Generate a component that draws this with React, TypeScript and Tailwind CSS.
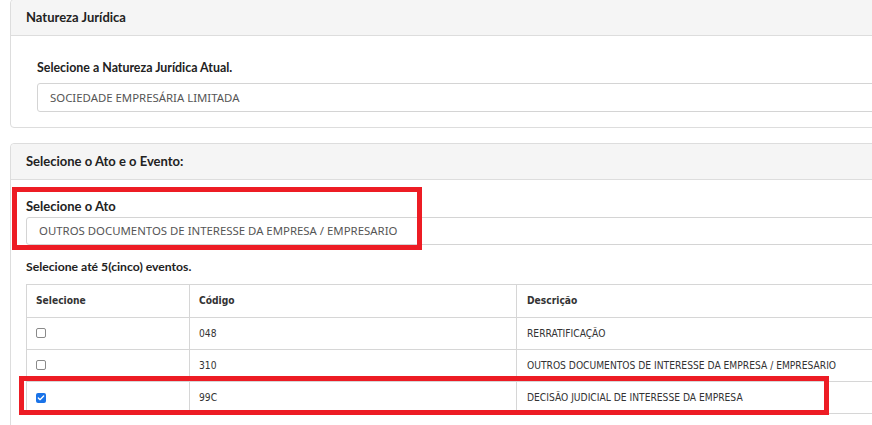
import { Check } from "lucide-react";

interface Evento {
  codigo: string;
  descricao: string;
  selecionado: boolean;
}

const eventos: Evento[] = [
  { codigo: "048", descricao: "RERRATIFICAÇÃO", selecionado: false },
  { codigo: "310", descricao: "OUTROS DOCUMENTOS DE INTERESSE DA EMPRESA / EMPRESARIO", selecionado: false },
  { codigo: "99C", descricao: "DECISÃO JUDICIAL DE INTERESSE DA EMPRESA", selecionado: true },
];

function Checkbox({ checked }: { checked: boolean }) {
  if (checked) {
    return (
      <span className="inline-flex w-[10px] h-[10px] items-center justify-center rounded-[2px] bg-[#1a73e8]">
        <Check className="w-[8px] h-[8px] text-white" strokeWidth={4} />
      </span>
    );
  }
  return <span className="inline-block w-[10px] h-[10px] rounded-[2px] border border-[#8a8a8a] bg-white" />;
}

function Panel({ title, children, className = "" }: { title: string; children: React.ReactNode; className?: string }) {
  return (
    <div className={`border border-[#dddddd] rounded-[4px] bg-white ${className}`}>
      <div className="h-[36px] flex items-center px-[15px] bg-[#f5f5f5] border-b border-[#dddddd] rounded-t-[4px] font-['Lato',sans-serif] text-[13px] font-bold text-[#222]">
        {title}
      </div>
      {children}
    </div>
  );
}

export default function App() {
  return (
    <div className="w-[872px] h-[425px] overflow-hidden bg-white font-['Noto_Sans',sans-serif]">
      <div className="w-[900px] ml-[10px] -mt-[1px] relative">
        {/* Natureza jurídica */}
        <Panel title="Natureza Jurídica">
          <div className="pt-[24px] pb-[15px] pl-[26px]">
            <label className="block font-['Lato',sans-serif] text-[12.4px] font-bold text-[#222] leading-[16px]">
              Selecione a Natureza Jurídica Atual.
            </label>
            <div className="mt-[7px] h-[29px] flex items-center pl-[12px] border border-[#d4d4d4] rounded-[3px] text-[11.4px] text-[#555]">
              SOCIEDADE EMPRESÁRIA LIMITADA
            </div>
          </div>
        </Panel>

        {/* Ato e eventos */}
        <Panel title="Selecione o Ato e o Evento:" className="mt-[15px] h-[320px]">
          <div className="pt-[18px] pl-[15px]">
            <label className="block font-['Lato',sans-serif] text-[13px] font-bold text-[#222] leading-[16px]">
              Selecione o Ato
            </label>
            <div className="mt-[3px] h-[28px] flex items-center pl-[12px] border border-[#d4d4d4] rounded-[3px] text-[11.4px] text-[#555]">
              OUTROS DOCUMENTOS DE INTERESSE DA EMPRESA / EMPRESARIO
            </div>
            <p className="mt-[14px] font-['Lato',sans-serif] text-[12.2px] font-bold text-[#222] leading-[16px]">
              Selecione até 5(cinco) eventos.
            </p>

            <table className="mt-[9px] w-full border-collapse font-['DejaVu_Sans_Condensed','DejaVu_Sans',sans-serif] text-[10.2px] text-[#333]">
              <thead>
                <tr className="h-[33px]">
                  <th className="w-[163px] border border-[#d6d6d6] text-left font-bold pl-[9px]">Selecione</th>
                  <th className="w-[327px] border border-[#d6d6d6] text-left font-bold pl-[9px]">Código</th>
                  <th className="border border-[#d6d6d6] text-left font-bold pl-[10px]">Descrição</th>
                </tr>
              </thead>
              <tbody>
                {eventos.map((ev) => (
                  <tr key={ev.codigo} className="h-[32px]">
                    <td className="border border-[#d6d6d6] pl-[9px] align-top pt-[9px]">
                      <Checkbox checked={ev.selecionado} />
                    </td>
                    <td className="border border-[#d6d6d6] pl-[9px]">{ev.codigo}</td>
                    <td className="border border-[#d6d6d6] pl-[10px]">{ev.descricao}</td>
                  </tr>
                ))}
              </tbody>
            </table>
          </div>
        </Panel>

        {/* destaques em vermelho */}
        <div className="absolute left-[2px] top-[188px] w-[410px] h-[63px] border-[5px] border-[#ed1c24]" />
        <div className="absolute left-[9px] top-[377px] w-[810px] h-[39px] border-[5px] border-[#ed1c24]" />
      </div>
    </div>
  );
}
